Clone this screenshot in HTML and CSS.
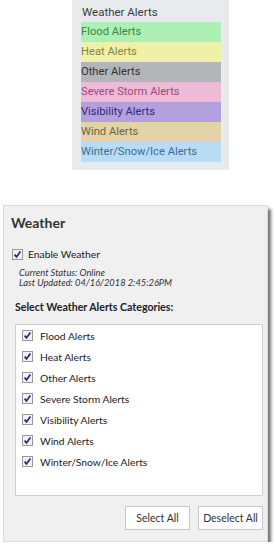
FILE: index.html
```html
<!doctype html>
<html lang="en">
<head>
    <meta charset="UTF-8">
    <title>Weather Alerts</title>
    <link rel="stylesheet" href="styles.css">
</head>
<body>
<div class="legend">
    <div class="legend-title">Weather Alerts</div>
    <div class="alert flood">Flood Alerts</div>
    <div class="alert heat">Heat Alerts</div>
    <div class="alert other">Other Alerts</div>
    <div class="alert storm">Severe Storm Alerts</div>
    <div class="alert visibility">Visibility Alerts</div>
    <div class="alert wind">Wind Alerts</div>
    <div class="alert winter">Winter/Snow/Ice Alerts</div>
</div>

<div class="panel">
    <h2 class="panel-title">Weather</h2>
    <label class="check enable">
        <svg class="box" width="11" height="11" viewBox="0 0 11 11"><rect x="0.5" y="0.5" width="10" height="10" fill="#f2f2f4" stroke="#999"/><path d="M2.6 5.6 L4.5 7.9 L8.4 2.6" fill="none" stroke="#26287a" stroke-width="1.7"/></svg>
        Enable Weather
    </label>
    <div class="status">
        <div>Current Status: Online</div>
        <div>Last Updated: 04/16/2018 2:45:26PM</div>
    </div>
    <div class="section-title">Select Weather Alerts Categories:</div>
    <div class="category-list">
        <label class="check">
            <svg class="box" width="11" height="11" viewBox="0 0 11 11"><rect x="0.5" y="0.5" width="10" height="10" fill="#f2f2f4" stroke="#999"/><path d="M2.6 5.6 L4.5 7.9 L8.4 2.6" fill="none" stroke="#26287a" stroke-width="1.7"/></svg>
            Flood Alerts
        </label>
        <label class="check">
            <svg class="box" width="11" height="11" viewBox="0 0 11 11"><rect x="0.5" y="0.5" width="10" height="10" fill="#f2f2f4" stroke="#999"/><path d="M2.6 5.6 L4.5 7.9 L8.4 2.6" fill="none" stroke="#26287a" stroke-width="1.7"/></svg>
            Heat Alerts
        </label>
        <label class="check">
            <svg class="box" width="11" height="11" viewBox="0 0 11 11"><rect x="0.5" y="0.5" width="10" height="10" fill="#f2f2f4" stroke="#999"/><path d="M2.6 5.6 L4.5 7.9 L8.4 2.6" fill="none" stroke="#26287a" stroke-width="1.7"/></svg>
            Other Alerts
        </label>
        <label class="check">
            <svg class="box" width="11" height="11" viewBox="0 0 11 11"><rect x="0.5" y="0.5" width="10" height="10" fill="#f2f2f4" stroke="#999"/><path d="M2.6 5.6 L4.5 7.9 L8.4 2.6" fill="none" stroke="#26287a" stroke-width="1.7"/></svg>
            Severe Storm Alerts
        </label>
        <label class="check">
            <svg class="box" width="11" height="11" viewBox="0 0 11 11"><rect x="0.5" y="0.5" width="10" height="10" fill="#f2f2f4" stroke="#999"/><path d="M2.6 5.6 L4.5 7.9 L8.4 2.6" fill="none" stroke="#26287a" stroke-width="1.7"/></svg>
            Visibility Alerts
        </label>
        <label class="check">
            <svg class="box" width="11" height="11" viewBox="0 0 11 11"><rect x="0.5" y="0.5" width="10" height="10" fill="#f2f2f4" stroke="#999"/><path d="M2.6 5.6 L4.5 7.9 L8.4 2.6" fill="none" stroke="#26287a" stroke-width="1.7"/></svg>
            Wind Alerts
        </label>
        <label class="check">
            <svg class="box" width="11" height="11" viewBox="0 0 11 11"><rect x="0.5" y="0.5" width="10" height="10" fill="#f2f2f4" stroke="#999"/><path d="M2.6 5.6 L4.5 7.9 L8.4 2.6" fill="none" stroke="#26287a" stroke-width="1.7"/></svg>
            Winter/Snow/Ice Alerts
        </label>
    </div>
    <div class="actions">
        <button class="btn">Select All</button>
        <button class="btn">Deselect All</button>
    </div>
</div>
</body>
</html>
```

FILE: styles.css
```css
* {
    box-sizing: border-box;
}

body {
    margin: 0;
    background: #fff;
}

/* legend card */
.legend {
    margin-left: 72px;
    width: 157px;
    padding: 0 8px 8px 9px;
    background: #e7ebee;
    font-family: Roboto, "Liberation Sans", sans-serif;
    font-size: 11.2px;
}

.legend-title {
    height: 22px;
    line-height: 24px;
    padding-left: 1px;
    color: #3c3c3c;
    font-size: 11.5px;
}

.alert {
    height: 20px;
    line-height: 20px;
}

.flood { background: #adf0b3; color: #3b8545; }
.heat { background: #f0f0a6; color: #86863e; }
.other { background: #b3b5b8; color: #333; }
.storm { background: #efb9d8; color: #a1497a; }
.visibility { background: #b3a0df; color: #33287a; }
.wind { background: #e3d3a9; color: #74643a; }
.winter { background: #b9dcf4; color: #3c6c96; }

/* settings panel */
.panel {
    margin: 35px 0 0 3px;
    width: 265px;
    padding: 8px 4px 11px 7px;
    background: #f0f0f0;
    border: 1px solid #dcdcdc;
    box-shadow: 3px 4px 3px rgba(0, 0, 0, 0.55);
    font-family: Lato, "Open Sans", sans-serif;
    color: #222;
}

.panel-title {
    margin: 0;
    font-size: 14px;
    line-height: 18px;
    font-weight: 700;
    color: #333;
}

.check {
    display: flex;
    align-items: center;
    gap: 7px;
    height: 21px;
    font-size: 10.3px;
}

.enable {
    margin: 14px 0 0 1px;
    height: 16px;
    gap: 5px;
}

.status {
    margin: 6px 0 0 8px;
    font-size: 9.3px;
    font-style: italic;
    line-height: 10px;
    color: #333;
}

.section-title {
    margin: 11px 0 0 4px;
    font-size: 10.6px;
    font-weight: 700;
    line-height: 16px;
}

.category-list {
    margin: 9px 0 0 4px;
    height: 172px;
    padding: 0 6px;
    background: #fff;
    border: 1px solid #cfcfcf;
}

.actions {
    display: flex;
    justify-content: flex-end;
    gap: 8px;
    margin-top: 10px;
}

.btn {
    width: 65px;
    height: 24px;
    padding: 0;
    background: #fff;
    border: 1px solid #c8c8c8;
    font-family: Lato, "Open Sans", sans-serif;
    font-size: 10.5px;
    color: #333;
}
```
